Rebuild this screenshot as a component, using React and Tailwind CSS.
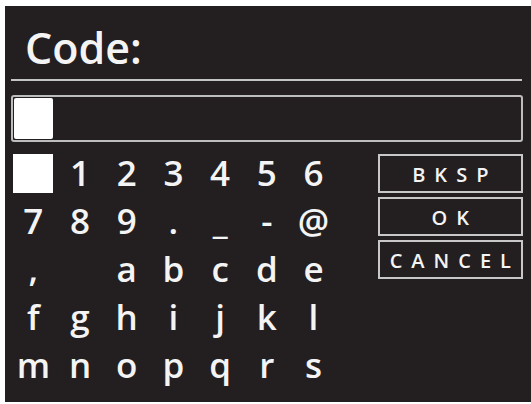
const rows = [
  ['', '1', '2', '3', '4', '5', '6'],
  ['7', '8', '9', '.', '_', '-', '@'],
  [',', ' ', 'a', 'b', 'c', 'd', 'e'],
  ['f', 'g', 'h', 'i', 'j', 'k', 'l'],
  ['m', 'n', 'o', 'p', 'q', 'r', 's'],
]

const buttons = ['BKSP', 'OK', 'CANCEL']

export default function App() {
  return (
    <div
      className="flex h-[404px] w-[531px] bg-white pb-[2px] pl-[5px] pt-[6px]"
      style={{ fontFamily: '"Open Sans", "Noto Sans", sans-serif' }}
    >
      <div className="flex flex-1 flex-col bg-[#231f20] text-[#f4f4f4]">
        <div className="ml-[20px] mt-[19px] h-[45px] text-[43px] font-semibold leading-[45px]">Code:</div>

        <div className="ml-[6px] mr-[9px] mt-[9px] h-[2px] bg-[#c4c4c4]" />

        <div className="ml-[6px] mr-[8px] mt-[14px] flex h-[47px] rounded-[3px] border-2 border-[#bdbdbd] p-px">
          <div className="h-full w-[39px] rounded-[2px] bg-white" />
        </div>

        <div className="mt-[7px] flex">
          <div className="ml-[5px] grid grid-cols-[repeat(7,46.7px)] grid-rows-[repeat(5,48px)]">
            {rows.flat().map((ch, i) =>
              i === 0 ? (
                <div key={i} className="flex items-center justify-center">
                  <div className="h-[39px] w-[40px] bg-white" />
                </div>
              ) : (
                <div key={i} className="flex items-center justify-center text-[35px] font-semibold leading-[48px]">
                  {ch}
                </div>
              ),
            )}
          </div>

          <div className="ml-[41px] mt-[5px] flex w-[145px] flex-col gap-[4px]">
            {buttons.map((b) => (
              <div
                key={b}
                className="flex h-[39px] items-center justify-center border-2 border-[#c8c8c8] pl-[0.45em] pt-[3px] text-[20px] font-semibold leading-none tracking-[0.45em]"
              >
                {b}
              </div>
            ))}
          </div>
        </div>
      </div>
    </div>
  )
}
